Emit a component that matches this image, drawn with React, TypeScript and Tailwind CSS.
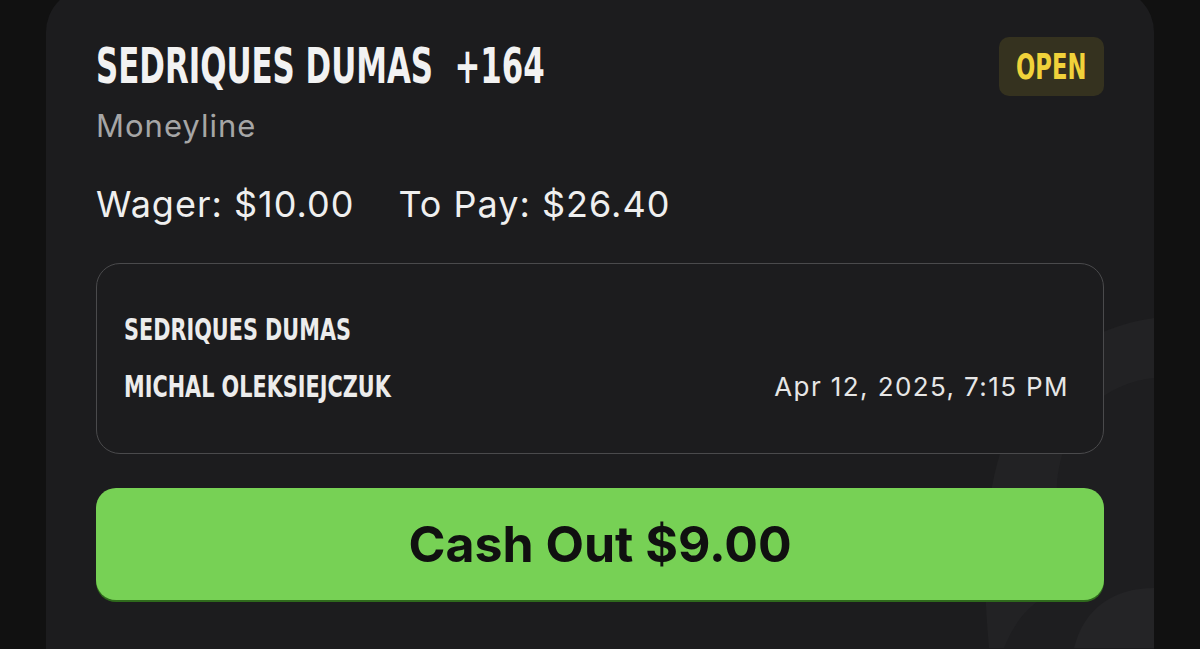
const condensed = "font-['Liberation_Sans_Narrow','DejaVu_Sans_Condensed',sans-serif] font-bold"
const body = "font-['Inter','Roboto',sans-serif]"

// faint logo mark behind the lower-right corner of the card
function Watermark() {
  return (
    <svg
      className="pointer-events-none absolute right-0 top-[330px] h-[330px] w-[240px]"
      viewBox="0 0 240 330"
    >
      <path
        d="M240 0C170 10 120 50 95 110c-20 50-30 110-20 220h165z"
        fill="#222224"
      />
      <path
        d="M240 60c-50 5-85 40-95 90-8 40 5 90 40 120-40-5-75 10-95 60h150z"
        fill="#1e1e20"
      />
      <path d="M160 330c10-40 40-60 80-60v60z" fill="#242426" />
    </svg>
  )
}

export default function App() {
  return (
    <div className="h-[649px] overflow-hidden bg-[#111111]">
      <div className="relative mx-[46px] -mt-[12px] h-[720px] overflow-hidden rounded-[44px] bg-[#1c1c1e] px-[50px] pt-[49px]">
        <Watermark />
        <div className="relative">
          <div className="flex h-[59px] items-center justify-between">
            <h1 className={`${condensed} text-[49px] leading-none text-[#f2f2f2]`}>
              <span className="inline-block origin-left scale-x-[0.7]">SEDRIQUES DUMAS&nbsp;&nbsp;+164</span>
            </h1>
            <span className="flex h-[59px] w-[105px] items-center justify-center rounded-[10px] bg-[#35321f]">
              <span className={`${condensed} inline-block scale-x-[0.7] text-[36px] leading-none text-[#f0d23a]`}>
                OPEN
              </span>
            </span>
          </div>
          <p className={`${body} mt-[12px] text-[31px] leading-[36px] tracking-[1px] text-[#a6a6a6]`}>Moneyline</p>
          <div className={`${body} mt-[38px] flex gap-[44px] text-[36px] leading-[44px] tracking-[1px] text-[#efefef]`}>
            <span>Wager: $10.00</span>
            <span>To Pay: $26.40</span>
          </div>
          <div className="mt-[37px] flex h-[191px] flex-col justify-center rounded-[24px] border-[1.5px] border-[#4a4a4c] bg-[#1c1c1e] pl-[27px] pr-[34px]">
            <div className={`${condensed} text-[30px] leading-[36px] text-[#ececec]`}>
              <span className="inline-block origin-left scale-x-[0.77]">SEDRIQUES DUMAS</span>
            </div>
            <div className="mt-[21px] flex items-center justify-between">
              <span className={`${condensed} text-[30px] leading-[36px] text-[#ececec]`}>
                <span className="inline-block origin-left scale-x-[0.77]">MICHAL OLEKSIEJCZUK</span>
              </span>
              <span className={`${body} text-[26px] leading-[36px] tracking-[1.4px] text-[#e6e6e6]`}>
                Apr 12, 2025, 7:15 PM
              </span>
            </div>
          </div>
          <button
            className={`${body} mt-[34px] flex h-[112px] w-full items-center justify-center rounded-[20px] bg-[#77d155] text-[50px] font-bold text-[#101010] shadow-[0_2px_0_#2f6a1c]`}
          >
            Cash Out $9.00
          </button>
        </div>
      </div>
    </div>
  )
}
